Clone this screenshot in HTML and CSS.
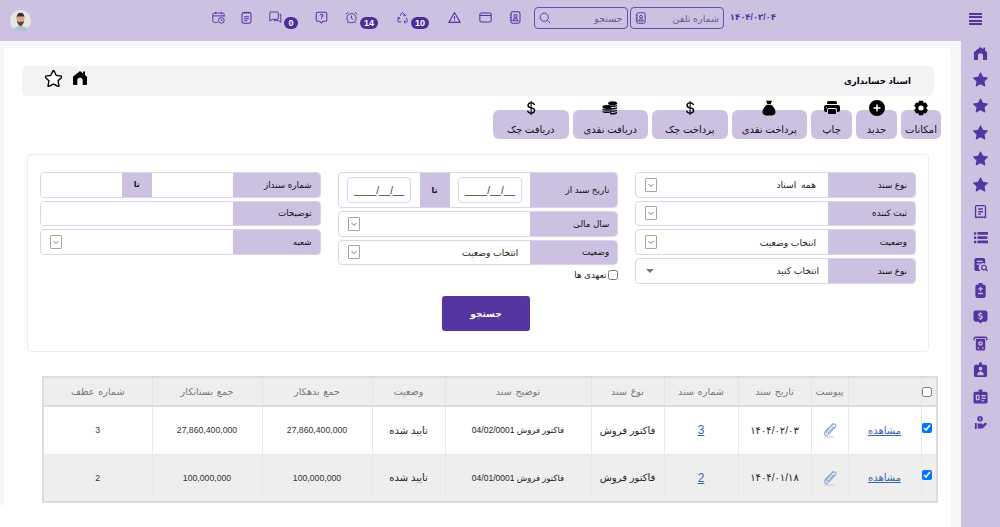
FILE: index.html
```html
<!DOCTYPE html>
<html lang="fa" dir="rtl">
<head>
<meta charset="utf-8">
<title>اسناد حسابداری</title>
<link rel="stylesheet" href="styles.css">
</head>
<body>
<svg class="defs" width="0" height="0" aria-hidden="true">
  <symbol id="i-star" viewBox="0 0 16 16"><path d="M3.612 15.443c-.386.198-.824-.149-.746-.592l.83-4.73L.173 6.765c-.329-.314-.158-.888.283-.95l4.898-.696L7.538.792c.197-.39.73-.39.927 0l2.184 4.327 4.898.696c.441.062.612.636.282.95l-3.522 3.356.83 4.73c.078.443-.36.79-.746.592L8 13.187l-4.389 2.256z"/></symbol>
  <symbol id="i-home" viewBox="0 0 16 16"><path d="M8 1 1.500 6.200C1.200 6.500 1 6.900 1 7.300V14a1 1 0 0 0 1 1h3.300v-4.500a2.700 2.700 0 0 1 5.400 0V15H14a1 1 0 0 0 1-1V7.300c0-.4-.2-.8-.5-1.100L13 5V1.500h-2v2z"/></symbol>
  <symbol id="i-dollar" viewBox="0 0 16 16"><path d="M4 10.781c.148 1.667 1.513 2.85 3.591 3.003V15h1.043v-1.216c2.27-.179 3.678-1.438 3.678-3.3 0-1.59-.947-2.51-2.956-3.028l-.722-.187V3.467c1.122.11 1.879.714 2.07 1.616h1.47c-.166-1.6-1.54-2.748-3.54-2.875V1H7.591v1.233c-1.939.23-3.27 1.472-3.27 3.156 0 1.454.966 2.483 2.661 2.917l.61.162v4.031c-1.149-.17-1.94-.8-2.131-1.718H4zm3.391-3.836c-1.043-.263-1.6-.825-1.6-1.616 0-.944.704-1.641 1.8-1.828v3.495l-.2-.05zm1.591 1.872c1.287.323 1.852.859 1.852 1.769 0 1.097-.826 1.828-2.2 1.939V8.73l.348.086z"/></symbol>
  <symbol id="i-gear" viewBox="0 0 16 16"><path fill-rule="evenodd" d="M6 .8h4l.7 2.200 2.200-.5 2 3.400L13.300 7.600v.8l1.600 1.700-2 3.400-2.200-.5-.7 2.200H6l-.7-2.200-2.200.5-2-3.400 1.600-1.700v-.8L1.100 5.900l2-3.400 2.200.5zM8 5.400a2.600 2.600 0 1 0 0 5.200 2.600 2.600 0 0 0 0-5.200z"/></symbol>
  <symbol id="i-plus" viewBox="0 0 16 16"><path fill-rule="evenodd" d="M8 0a8 8 0 1 1 0 16A8 8 0 0 1 8 0zm-.8 4.500v2.700H4.500v1.600h2.700v2.700h1.600V8.800h2.700V7.200H8.800V4.500z"/></symbol>
  <symbol id="i-print" viewBox="0 0 16 16"><path d="M5 1a2 2 0 0 0-2 2v1h10V3a2 2 0 0 0-2-2H5zm6 8H5a1 1 0 0 0-1 1v3a1 1 0 0 0 1 1h6a1 1 0 0 0 1-1v-3a1 1 0 0 0-1-1z"/><path d="M0 7a2 2 0 0 1 2-2h12a2 2 0 0 1 2 2v3a2 2 0 0 1-2 2h-1v-2a2 2 0 0 0-2-2H5a2 2 0 0 0-2 2v2H2a2 2 0 0 1-2-2V7zm2.500 1a.5.5 0 1 0 0-1 .5.5 0 0 0 0 1z"/></symbol>
  <symbol id="i-bag" viewBox="0 0 16 16"><path d="M5 .8h6L9.700 4H6.300zM6 4.800h4c2.500 1.700 4.500 4.700 4.500 7.300 0 2.300-1.500 3.300-3.500 3.300H5c-2 0-3.500-1-3.500-3.300C1.500 9.500 3.500 6.500 6 4.800z"/></symbol>
  <symbol id="i-coins" viewBox="0 0 18 16"><ellipse cx="12" cy="2.600" rx="5" ry="2.300"/><path d="M7 4.300c1 1.300 9 1.300 10 0v1.500c-1 1.500-9 1.500-10 0zM7 7c1 1.300 9 1.300 10 0v1.500c-1 1.500-9 1.500-10 0zM9 10.500c3 .6 7 .3 8-.9v1.500c-1 1.300-5 1.500-8 1zM9 13.200c3 .6 7 .3 8-.9v1.500c-1 1.500-6 1.700-8 1.100z"/><ellipse cx="5.500" cy="6.800" rx="5" ry="2.200"/><path d="M.5 8.500c1 1.300 9 1.300 10 0V10c-1 1.500-9 1.500-10 0zM.5 11c1 1.300 9 1.300 10 0v1.500c-1 1.500-9 1.500-10 0z"/></symbol>
  <symbol id="i-chev" viewBox="0 0 10 10"><path d="M2.500 4 5 6.500 7.500 4" fill="none" stroke="#666" stroke-width=".9"/></symbol>
  <symbol id="i-contact" viewBox="0 0 16 16"><g fill="none" stroke="currentColor" stroke-width="1.300"><rect x="2.500" y="1" width="11" height="14" rx="2"/><circle cx="8" cy="6.300" r="1.900"/><path d="M4.800 12c.4-2 1.600-2.800 3.200-2.800s2.800.8 3.200 2.800zM1 4.500h2M1 8h2M1 11.500h2"/></g></symbol>
  <symbol id="i-search" viewBox="0 0 16 16"><g fill="none" stroke="currentColor" stroke-width="1.200"><circle cx="7" cy="7" r="5.500"/><path d="m11 11 4 4"/></g></symbol>
  <symbol id="i-wallet" viewBox="0 0 16 16"><g fill="none" stroke="currentColor" stroke-width="1.300"><rect x="1" y="2.500" width="14" height="11" rx="2"/><path d="M1 5.500h14"/></g></symbol>
  <symbol id="i-warn" viewBox="0 0 16 16"><g fill="none" stroke="currentColor" stroke-width="1.300"><path d="M8 1.800 15 14H1z" stroke-linejoin="round"/><path d="M8 6v4M8 11.300v1"/></g></symbol>
  <symbol id="i-recycle" viewBox="0 0 16 16"><g fill="none" stroke="currentColor" stroke-width="1.200" stroke-linejoin="round"><path d="M5 6 7 2.500c.5-.8 1.500-.8 2 0l1.700 2.800M12.500 4.300 11 6l-2-.6M12.500 8.500l1.700 3c.4.900-.2 1.800-1.200 1.800H10M11.800 15 9.800 13.300l1.800-1.800M6.500 13.300H3c-1 0-1.600-.9-1.200-1.800L3.500 8.500M1.500 8.700 4 8l.8 2.300"/></g></symbol>
  <symbol id="i-alarm" viewBox="0 0 16 16"><g fill="none" stroke="currentColor" stroke-width="1.200"><circle cx="8" cy="8.800" r="5.700"/><path d="M8 5.500v3.500l2 1.500M1 4 4 1.300M15 4l-3-2.700M4 13.500 2.800 15M12 13.500l1.200 1.500"/></g></symbol>
  <symbol id="i-help" viewBox="0 0 16 16"><g fill="none" stroke="currentColor" stroke-width="1.300"><path d="M3 1.500h10a1.500 1.500 0 0 1 1.500 1.500v8a1.500 1.500 0 0 1-1.500 1.500h-3L8 14.800l-2-2.300H3A1.500 1.500 0 0 1 1.500 11V3A1.500 1.500 0 0 1 3 1.500z"/><path d="M6.300 5.500c.2-1 .9-1.500 1.800-1.500 1 0 1.700.6 1.700 1.500 0 1.300-1.800 1.300-1.800 2.800M8 9.300v1"/></g></symbol>
  <symbol id="i-chat" viewBox="0 0 16 16"><g fill="none" stroke="currentColor" stroke-width="1.200" stroke-linejoin="round"><path d="M2.500 1.200h7.500a1.500 1.500 0 0 1 1.500 1.500v6a1.500 1.500 0 0 1-1.500 1.500H4L1 12.500V2.700a1.500 1.500 0 0 1 1.500-1.500z"/><path d="M13 4h1.500v10l-2.500-2.200H6.500V10.500"/></g></symbol>
  <symbol id="i-note" viewBox="0 0 16 16"><g fill="none" stroke="currentColor" stroke-width="1.300"><rect x="2.500" y="2" width="11" height="13" rx="2"/><path d="M5.500 1v2M8 1v2M10.500 1v2M5 7h6M5 9.500h6M5 12h4"/></g></symbol>
  <symbol id="i-cal" viewBox="0 0 16 16"><g fill="none" stroke="currentColor" stroke-width="1.200"><path d="M7 14H3a2 2 0 0 1-2-2V4.500a2 2 0 0 1 2-2h10a2 2 0 0 1 2 2V7M1 6h14M4.500 1v3M11.500 1v3"/><circle cx="11.500" cy="11.500" r="3.500"/><path d="M11.500 10v1.700h1.300"/></g></symbol>
  <symbol id="i-doc" viewBox="0 0 16 16"><path fill="currentColor" fill-rule="evenodd" d="M4 1h8a2 2 0 0 1 2 2v11.500l-1.500 1-1.500-1-1.500 1-1.500-1-1.500 1-1.500-1-1.500 1L2 14.500V3a2 2 0 0 1 2-2zm-.6 1.500v10.800h9.200V2.500z"/><path fill="currentColor" d="M5.500 4.500h5V6h-5zM5.500 7.500h5V9h-5zM5.500 10.200h3v1.300h-3z"/></symbol>
  <symbol id="i-list" viewBox="0 0 16 16"><path fill="currentColor" d="M1 2.500h2.500V5H1zM6 2h9.500a1 1 0 0 1 0 3H6a1 1 0 0 1 0-3zM1 7h2.500v2.500H1zM6 6.700h8a1 1 0 0 1 0 3H6a1 1 0 0 1 0-3zM1 11.500h2.500V14H1zM6 11.200h9.500a1 1 0 0 1 0 3H6a1 1 0 0 1 0-3z"/></symbol>
  <symbol id="i-docs" viewBox="0 0 16 16"><path fill="currentColor" fill-rule="evenodd" d="M3.500 1H11a2 2 0 0 1 2 2v4.200a4.300 4.300 0 0 0-4.800 7.800H3.500a2 2 0 0 1-2-2V3a2 2 0 0 1 2-2zM4 4v1.300h6.500V4zM4 7v1.300h4V7z"/><circle cx="11.700" cy="11.300" r="2.500" fill="none" stroke="currentColor" stroke-width="1.300"/><path d="m13.500 13 2 2" stroke="currentColor" stroke-width="1.300"/></symbol>
  <symbol id="i-clip" viewBox="0 0 16 16"><path fill="currentColor" fill-rule="evenodd" d="M6 0h4v1.500h1A2.500 2.500 0 0 1 13.500 4v9.500A2.500 2.500 0 0 1 11 16H5a2.500 2.500 0 0 1-2.500-2.500V4A2.500 2.500 0 0 1 5 1.500h1zM7.300 4v1.700H5.600V7h1.700v1.700h1.400V7h1.700V5.700H8.700V4zM5.500 10.500V12h5v-1.500z"/></symbol>
  <symbol id="i-badge" viewBox="0 0 16 16"><path fill="currentColor" fill-rule="evenodd" d="M3 1.500h10A2.500 2.500 0 0 1 15.500 4v7a2.500 2.500 0 0 1-2.500 2.500h-3L8 15.500l-2-2H3A2.500 2.500 0 0 1 .5 11V4A2.500 2.500 0 0 1 3 1.500zM7.300 3.500v1C6 4.700 5.400 5.400 5.400 6.300c0 2 3.700 1.300 3.700 2.600 0 .8-2 .8-3.300 0v1.300c.4.200 1 .4 1.500.4v1h1.400v-1c1.200-.2 1.900-1 1.900-1.900 0-2.100-3.700-1.400-3.700-2.500 0-.7 1.600-.7 2.900-.1V4.800c-.3-.2-.7-.3-1.100-.3v-1z"/></symbol>
  <symbol id="i-atm" viewBox="0 0 16 16"><path fill="currentColor" fill-rule="evenodd" d="M3 .5h10a2.500 2.500 0 0 1 2.500 2.500v1.500h-1.500V3a1 1 0 0 0-1-1H3a1 1 0 0 0-1 1v1.500H.5V3A2.500 2.500 0 0 1 3 .5zM4.500 3h7A1.500 1.500 0 0 1 13 4.500V14a1.500 1.500 0 0 1-1.500 1.500h-7A1.500 1.500 0 0 1 3 14V4.500A1.500 1.500 0 0 1 4.500 3zM8 5.500a2.500 2.500 0 1 0 0 5 2.500 2.500 0 0 0 0-5zM8 7a1 1 0 1 1 0 2 1 1 0 0 1 0-2zM5 12v1.500h1.500V12zM9.500 12v1.500H11V12z"/></symbol>
  <symbol id="i-person" viewBox="0 0 16 16"><path fill="currentColor" fill-rule="evenodd" d="M6.500.5h3V3H13a2 2 0 0 1 2 2v9a2 2 0 0 1-2 2H3a2 2 0 0 1-2-2V5a2 2 0 0 1 2-2h3.500zM8 5a2 2 0 1 0 0 4 2 2 0 0 0 0-4zM4.500 14h7c0-2.500-1.500-4-3.500-4s-3.500 1.500-3.500 4z"/></symbol>
  <symbol id="i-idcard" viewBox="0 0 16 16"><path fill="currentColor" fill-rule="evenodd" d="M6 .5h4V3h3.500A2 2 0 0 1 15.500 5v8.500a2 2 0 0 1-2 2h-11a2 2 0 0 1-2-2V5a2 2 0 0 1 2-2H6zM3 6v6h4V6zM4.300 7.300h1.400v3.400H4.300zM9 6.500v1.500h4.500V6.500zM9 9.200v1.500h4.500V9.200zM9 12v1h3v-1z"/></symbol>
  <symbol id="i-hand" viewBox="0 0 16 16"><path fill="currentColor" fill-rule="evenodd" d="M7.500 1a3 3 0 1 1 0 6 3 3 0 0 1 0-6zM7 2.500v3.200h1V2.500zM2 8.500h2v6.500H2zM5 9h3.500c1 0 1.500.5 1.500 1.300l3-2c1-.6 2.300.7 1.500 1.700L11 13.500c-.6.700-1.300 1-2 1H5z"/></symbol>
  <symbol id="i-paper" viewBox="0 0 16 16"><path fill="none" stroke="currentColor" stroke-width="1.100" d="M12 1 3.500 9.500c-1.200 1.300-1.300 2.800-.3 3.700s2.500.8 3.700-.4l7.200-7.800c.9-1.100.8-2.300 0-3s-2-.6-2.900.4L5 9.600c-.5.600-.5 1.300 0 1.700s1.100.3 1.700-.3l6-6.500"/><path fill="none" stroke="#c4c4c4" stroke-width="1" d="M2 15.500h11"/></symbol>
</svg>

<header class="topbar">
  <button class="menu" aria-label="منو"><span></span><span></span><span></span><span></span></button>
  <span class="today">۱۴۰۴/۰۳/۰۴</span>
  <label class="search-box"><span class="search-label">شماره تلفن</span><svg class="ico-14"><use href="#i-contact"/></svg></label>
  <label class="search-box search-narrow"><span class="search-label">جستجو</span><svg class="ico-14"><use href="#i-search"/></svg></label>
  <div class="tools">
    <svg class="ico-14 t-contact"><use href="#i-contact"/></svg>
    <svg class="ico-14 t-wallet"><use href="#i-wallet"/></svg>
    <svg class="ico-14 t-warn"><use href="#i-warn"/></svg>
    <span class="tool t-recycle"><span class="pill">10</span><svg class="ico-14"><use href="#i-recycle"/></svg></span>
    <span class="tool t-alarm"><span class="pill">14</span><svg class="ico-14"><use href="#i-alarm"/></svg></span>
    <svg class="ico-14 t-help"><use href="#i-help"/></svg>
    <span class="tool t-chat"><span class="pill pill-round">0</span><svg class="ico-14"><use href="#i-chat"/></svg></span>
    <svg class="ico-14 t-note"><use href="#i-note"/></svg>
    <svg class="ico-14 t-cal"><use href="#i-cal"/></svg>
  </div>
  <div class="avatar">
    <svg viewBox="0 0 22 22" width="21" height="21">
      <circle cx="11" cy="11" r="11" fill="#e6e6e6"/>
      <path d="M3.500 22c.5-3.500 3-5 7.500-5s7 1.500 7.500 5z" fill="#a9c4dc"/>
      <path d="M9 14h4v4l-2 1.500L9 18z" fill="#d9a98a"/>
      <ellipse cx="11" cy="10" rx="4" ry="5.500" fill="#d8a88c"/>
      <path d="M7 9c-.3-4 1.500-6 4.300-6S15.200 5 15 9l-.8-2.500c-2 .3-4.500.3-6.300 0z" fill="#3d3029"/>
      <path d="M7.300 11c.5 4 2 5.600 3.700 5.600s3.200-1.600 3.700-5.600c-.6 1.200-1.500 1.500-3.700 1.500s-3.100-.3-3.700-1.500z" fill="#5b4436"/>
    </svg>
  </div>
</header>

<div class="layout">
  <nav class="sidebar" aria-label="منوی کناری">
    <svg class="side-ico"><use href="#i-home"/></svg>
    <svg class="side-ico"><use href="#i-star"/></svg>
    <svg class="side-ico"><use href="#i-star"/></svg>
    <svg class="side-ico"><use href="#i-star"/></svg>
    <svg class="side-ico"><use href="#i-star"/></svg>
    <svg class="side-ico"><use href="#i-star"/></svg>
    <svg class="side-ico"><use href="#i-doc"/></svg>
    <svg class="side-ico"><use href="#i-list"/></svg>
    <svg class="side-ico"><use href="#i-docs"/></svg>
    <svg class="side-ico"><use href="#i-clip"/></svg>
    <svg class="side-ico"><use href="#i-badge"/></svg>
    <svg class="side-ico"><use href="#i-atm"/></svg>
    <svg class="side-ico"><use href="#i-person"/></svg>
    <svg class="side-ico"><use href="#i-idcard"/></svg>
    <svg class="side-ico"><use href="#i-hand"/></svg>
  </nav>

  <div class="content">
  <main class="card">
    <div class="title-bar">
      <h1 class="title">اسناد حسابداری</h1>
      <div class="title-icons">
        <svg class="title-home"><use href="#i-home"/></svg>
        <svg class="title-star" viewBox="0 0 16 16"><path d="M3.612 15.443c-.386.198-.824-.149-.746-.592l.83-4.73L.173 6.765c-.329-.314-.158-.888.283-.95l4.898-.696L7.538.792c.197-.39.73-.39.927 0l2.184 4.327 4.898.696c.441.062.612.636.282.95l-3.522 3.356.83 4.73c.078.443-.36.79-.746.592L8 13.187l-4.389 2.256z" fill="#fff" stroke="#000" stroke-width="1.300"/></svg>
      </div>
    </div>

    <div class="toolbar">
      <button class="tbtn w40"><svg class="tb-ico"><use href="#i-gear"/></svg>امکانات</button>
      <button class="tbtn w41"><svg class="tb-ico"><use href="#i-plus"/></svg>جدید</button>
      <button class="tbtn w41"><svg class="tb-ico"><use href="#i-print"/></svg>چاپ</button>
      <button class="tbtn w76"><svg class="tb-ico"><use href="#i-bag"/></svg>پرداخت نقدی</button>
      <button class="tbtn w76"><svg class="tb-ico"><use href="#i-dollar"/></svg>پرداخت چک</button>
      <button class="tbtn w76"><svg class="tb-ico"><use href="#i-coins"/></svg>دریافت نقدی</button>
      <button class="tbtn w76"><svg class="tb-ico"><use href="#i-dollar"/></svg>دریافت چک</button>
    </div>

    <section class="panel">
      <div class="filters">
        <div class="fcol">
          <div class="field"><span class="flabel">نوع سند</span><div class="fselect"><span class="sval spaced">همه اسناد</span><svg class="arrow"><use href="#i-chev"/></svg></div></div>
          <div class="field"><span class="flabel">ثبت کننده</span><div class="fselect"><span class="sval"></span><svg class="arrow"><use href="#i-chev"/></svg></div></div>
          <div class="field"><span class="flabel">وضعیت</span><div class="fselect"><span class="sval">انتخاب وضعیت</span><svg class="arrow"><use href="#i-chev"/></svg></div></div>
          <div class="field"><span class="flabel">نوع سند</span><div class="fselect"><span class="sval dark">انتخاب کنید</span><span class="caret"></span></div></div>
        </div>
        <div class="fcol">
          <div class="field field-tall"><span class="flabel">تاریخ سند از</span><div class="fdate"><input class="date" value="__/__/____"></div><span class="flabel fto">تا</span><div class="fdate"><input class="date" value="__/__/____"></div></div>
          <div class="field"><span class="flabel">سال مالی</span><div class="fselect"><span class="sval"></span><svg class="arrow"><use href="#i-chev"/></svg></div></div>
          <div class="field"><span class="flabel">وضعیت</span><div class="fselect"><span class="sval">انتخاب وضعیت</span><svg class="arrow"><use href="#i-chev"/></svg></div></div>
          <label class="check"><input type="checkbox"><span>تعهدی ها</span></label>
        </div>
        <div class="fcol">
          <div class="field"><span class="flabel">شماره سنداز</span><input class="ftext"><span class="flabel fto">تا</span><input class="ftext"></div>
          <div class="field"><span class="flabel">توضیحات</span><input class="ftext"></div>
          <div class="field"><span class="flabel">شعبه</span><div class="fselect"><span class="sval"></span><svg class="arrow"><use href="#i-chev"/></svg></div></div>
        </div>
      </div>
      <button class="search-btn">جستجو</button>
    </section>

    <table class="grid">
      <thead>
        <tr>
          <th class="c-check td-check"><input type="checkbox"></th>
          <th class="c-view"></th>
          <th class="c-att">پیوست</th>
          <th class="c-date">تاریخ سند</th>
          <th class="c-num">شماره سند</th>
          <th class="c-type">نوع سند</th>
          <th class="c-desc">توضیح سند</th>
          <th class="c-stat">وضعیت</th>
          <th class="c-deb">جمع بدهکار</th>
          <th class="c-cre">جمع بستانکار</th>
          <th>شماره عطف</th>
        </tr>
      </thead>
      <tbody>
        <tr>
          <td class="td-check"><input type="checkbox" checked></td>
          <td><a href="#">مشاهده</a></td>
          <td><svg class="paper"><use href="#i-paper"/></svg></td>
          <td>۱۴۰۴/۰۲/۰۳</td>
          <td><a class="num-link" href="#">3</a></td>
          <td class="big">فاکتور فروش</td>
          <td class="small">فاکتور فروش 04/02/0001</td>
          <td class="big">تایید شده</td>
          <td class="amt">27,860,400,000</td>
          <td class="amt">27,860,400,000</td>
          <td class="amt">3</td>
        </tr>
        <tr>
          <td class="td-check"><input type="checkbox" checked></td>
          <td><a href="#">مشاهده</a></td>
          <td><svg class="paper"><use href="#i-paper"/></svg></td>
          <td>۱۴۰۴/۰۱/۱۸</td>
          <td><a class="num-link" href="#">2</a></td>
          <td class="big">فاکتور فروش</td>
          <td class="small">فاکتور فروش 04/01/0001</td>
          <td class="big">تایید شده</td>
          <td class="amt">100,000,000</td>
          <td class="amt">100,000,000</td>
          <td class="amt">2</td>
        </tr>
      </tbody>
    </table>
  </main>
  </div>
</div>
</body>
</html>
```

FILE: styles.css
```css
* { box-sizing: border-box; }
html, body { margin: 0; height: 100%; }
body {
  width: 1000px; height: 527px; overflow: hidden;
  background: #fff;
  font-family: "Liberation Sans", "DejaVu Sans", sans-serif;
  font-size: 10px; color: #222;
}
.defs { position: absolute; }
button, input { font-family: inherit; }

.topbar {
  height: 41px; background: #cdc1e1; color: #5535a0;
  display: flex; align-items: center; padding-right: 18px;
}
.menu { width: 13px; height: 13px; padding: 0; border: 0; background: none; display: flex; flex-direction: column; gap: 1.500px; margin-top: -3px; }
.menu span { display: block; height: 2px; background: #5535a0; }
.today { margin-right: 193px; width: 44px; font-weight: 700; font-size: 8.500px; white-space: nowrap; text-align: center; margin-top: -8px; }
.search-box {
  width: 94px; height: 22px; margin-right: 8px; margin-top: -5px; display: flex; align-items: center; justify-content: space-between;
  border: 1px solid #6a4fae; border-radius: 4px; padding: 0 4px; color: #5535a0;
}
.search-narrow { margin-right: 2.500px; }
.search-label { font-size: 9.500px; color: #6b5a99; }
.search-box .ico-14 { width: 12px; height: 12px; }
.ico-14 { width: 13px; height: 13px; flex: none; color: #5535a0; }
.tools { display: flex; align-items: center; margin-right: 11.500px; margin-top: -7px; }
.tool { display: flex; align-items: center; position: relative; }
.pill {
  background: #4b2c9b; color: #fff; font-weight: 700; font-size: 9px; line-height: 12px; height: 12px;
  width: 18px; text-align: center; border-radius: 7px; margin-left: 2px; position: relative; top: 6px;
}
.pill-round { width: 14px; }
.t-wallet { margin-right: 17px; }
.t-warn { margin-right: 18px; }
.t-recycle { margin-right: 19px; }
.t-alarm { margin-right: 18px; }
.t-help { margin-right: 17px; }
.t-chat { margin-right: 17px; }
.t-note { margin-right: 16px; }
.t-cal { margin-right: 15px; }
.avatar { margin-right: auto; margin-left: 10px; width: 21px; height: 21px; }

.layout { display: flex; height: 486px; }
.sidebar {
  width: 39px; flex: none; background: #cdc1e1; padding-top: 4.500px;
  display: flex; flex-direction: column; align-items: center; gap: 11.400px;
}
.side-ico { width: 15px; height: 15px; fill: #5535a0; color: #5535a0; flex: none; }

.content { flex: 1; height: 486px; background: #f5f5f5; padding: 7px 10px 0 0; }
.card {
  width: 951px; height: 479px; border-top-right-radius: 4px; padding: 18px 17px 0 22px;
  background: linear-gradient(#f5f5f5, #f5f5f5) left top / 4px 457px no-repeat, #fff;
}
.title-bar {
  height: 30px; background: #f3f3f6; border-radius: 5px;
  display: flex; align-items: center; justify-content: space-between;
  padding: 0 23px 0 23px;
}
.title { margin: 0; font-size: 8.600px; font-weight: 700; color: #000; }
.title-icons { display: flex; gap: 10px; align-items: center; margin-top: -6px; }
.title-home { width: 16px; height: 16px; fill: #000; }
.title-star { width: 17px; height: 17px; }

.toolbar { display: flex; gap: 4px; margin: 14px -7px 0 0; height: 29px; }
.tbtn {
  height: 29px; border: 0; border-radius: 6px; background: #cdc1e1; color: #111; font-size: 10px; line-height: 12px;
  padding: 0; display: flex; flex-direction: column; align-items: center; justify-content: flex-start;
}
.tb-ico { width: 16px; height: 16px; fill: #000; margin-top: -10px; margin-bottom: 8px; flex: none; }
.w40 { width: 40px; } .w41 { width: 41px; } .w76 { width: 75.500px; }

.panel {
  margin: 15px 5px 0; height: 198px; border: 1px solid #eeeeee; border-radius: 4px; padding: 17px 12px 0;
  display: flex; flex-direction: column;
}
.filters { display: grid; grid-template-columns: repeat(3, minmax(0, 1fr)); gap: 17px; height: 110px; }
.fcol { display: flex; flex-direction: column; gap: 3px; min-width: 0; }
.field {
  height: 25.670px; flex: none; display: flex; border: 1px solid #dcd5ea; border-radius: 4px; overflow: hidden; background: #fff;
}
.field-tall { height: 36px; }
.flabel {
  width: 87px; flex: none; background: #cdc1e1; color: #111; display: flex; align-items: center; padding-right: 8px; font-size: 8.800px; white-space: nowrap;
}
.fto { width: 30px; padding: 0; justify-content: center; font-weight: 700; font-size: 8px; }
.fselect { flex: 1; display: flex; align-items: center; justify-content: space-between; padding: 0 12px 0 9px; min-width: 0; }
.sval { color: #222; font-size: 9.200px; white-space: nowrap; }
.spaced { word-spacing: 2px; }
.dark { margin-right: -3px; }
.arrow { width: 12px; height: 14px; border: 1px solid #aaa4a0; background: #fff; border-radius: 1px; }
.caret { width: 0; height: 0; border: 4px solid transparent; border-top: 4px solid #777; border-bottom: 0; margin-left: 1px; }
.fdate { flex: 1; display: flex; align-items: center; justify-content: center; min-width: 0; }
.date { width: 64px; height: 26px; border: 1px solid #dcd5ea; border-radius: 4px; text-align: center; font-size: 10px; color: #333; padding: 0; background: #fff; }
.ftext { flex: 1; min-width: 0; border: 0; padding: 0; background: #fff; outline: 0; }
.check { display: flex; align-items: center; gap: 2px; font-size: 8.800px; height: 14px; color: #111; }
.check input { width: 10px; height: 10px; margin: 0; }
.search-btn {
  width: 88px; height: 35px; margin: 14px 386px 0 0; border: 0; border-radius: 3px; background: #5535a0; color: #fff; font-size: 9px; font-weight: 700;
}

.grid {
  table-layout: fixed; width: 896px; border-collapse: collapse; margin: 24px -4px 0 0;
  border: 2px solid #dcdcdc; color: #222; font-size: 10px; text-align: center;
}
.grid th { height: 29px; background: #eeeeee; color: #777; font-weight: 400; border: 1px solid #e3e3e3; border-bottom: 2px solid #dcdcdc; padding: 0; font-size: 9.600px; word-spacing: 1px; }
.grid td { height: 48px; border: 1px solid #e8e8e8; padding: 0; background: #fff; }
.grid tbody tr:nth-child(2) td { background: #eeeeee; }
.c-check { width: 16px; } .c-view { width: 73px; } .c-att { width: 37px; } .c-date { width: 73px; }
.c-num { width: 74px; } .c-type { width: 73px; } .c-desc { width: 146px; } .c-stat { width: 73px; }
.c-deb { width: 110px; } .c-cre { width: 110px; }
.grid input { margin: 0; width: 10px; height: 10px; vertical-align: middle; }
.grid .td-check { padding-right: 4px; }
.grid tbody .td-check { padding-bottom: 6px; }
.grid a { color: #3a66b0; }
.grid .num-link { font-size: 12px; }
.amt { font-size: 8.700px; color: #333; }
.paper { width: 15px; height: 16px; color: #8aa5d6; vertical-align: middle; }
.big { font-size: 10px; }
.small { font-size: 8.500px; }
```
